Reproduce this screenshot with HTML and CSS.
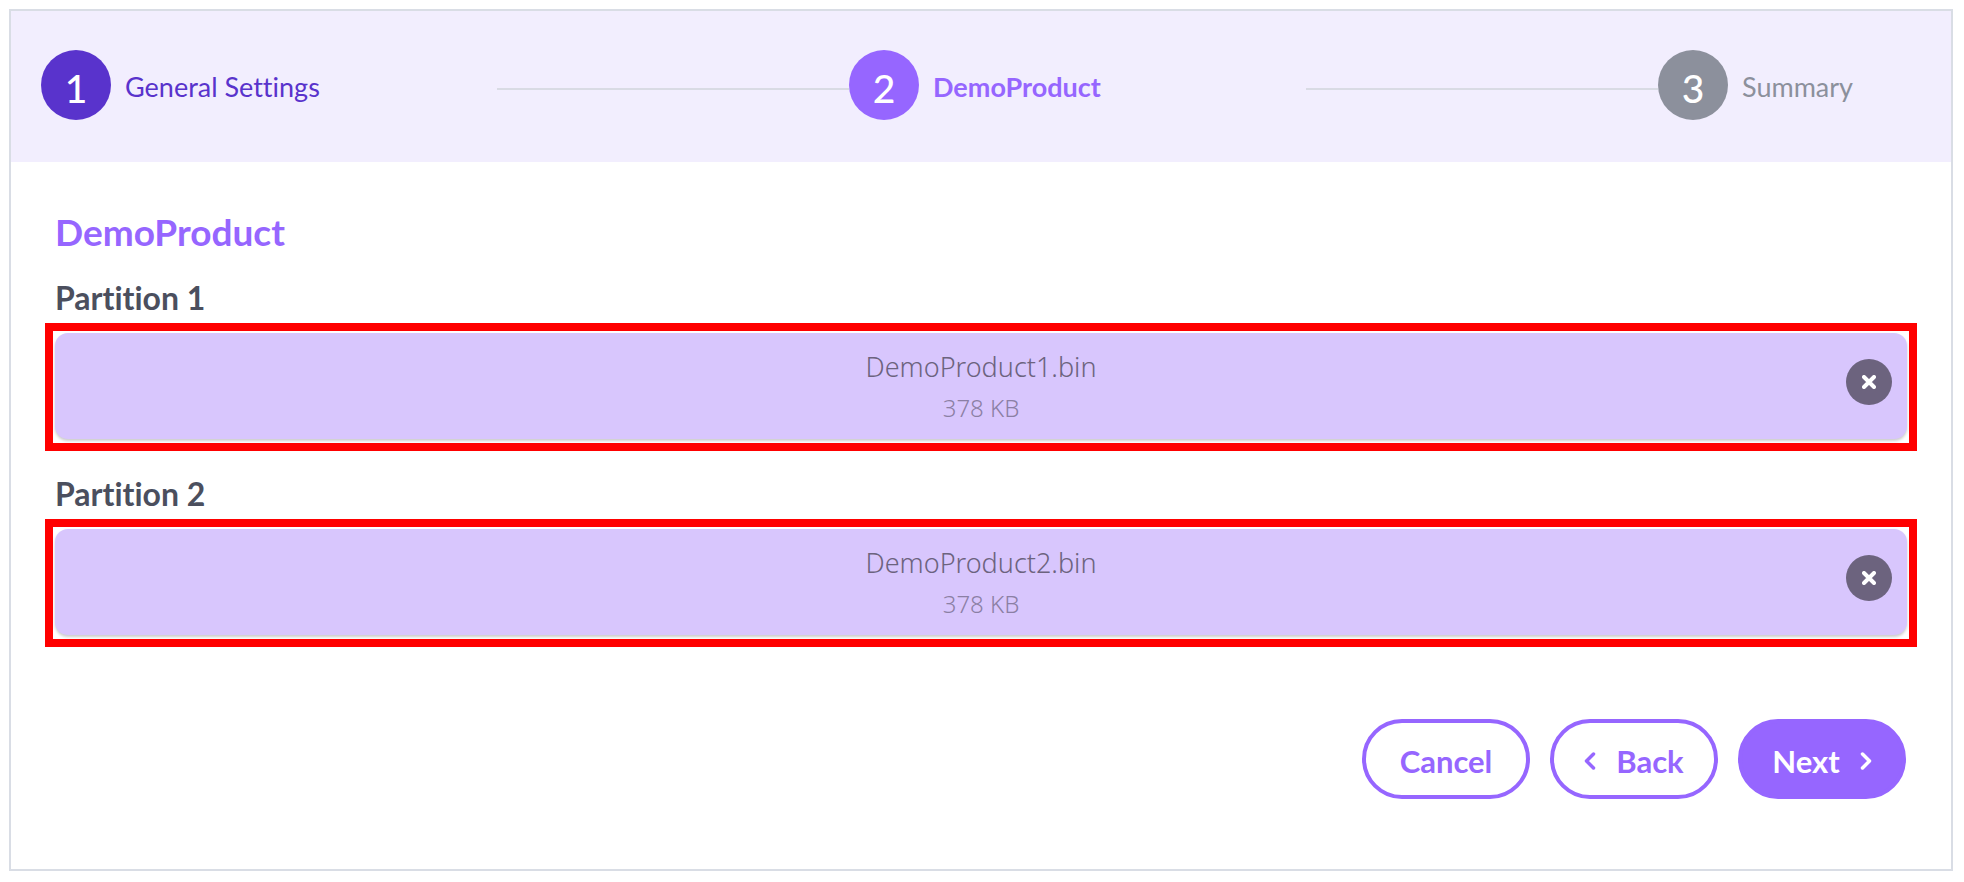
FILE: index.html
```html
<!DOCTYPE html>
<html lang="en">
<head>
<meta charset="utf-8">
<title>DemoProduct</title>
<link rel="stylesheet" href="styles.css">
</head>
<body>
<main class="wizard">
  <ol class="steps">
    <li class="step step-done">
      <div class="step-info"><span class="step-number">1</span><span class="step-label">General Settings</span></div>
      <span class="step-line"></span>
    </li>
    <li class="step step-active" aria-current="step">
      <div class="step-info"><span class="step-number">2</span><span class="step-label">DemoProduct</span></div>
      <span class="step-line"></span>
    </li>
    <li class="step step-pending">
      <div class="step-info"><span class="step-number">3</span><span class="step-label">Summary</span></div>
    </li>
  </ol>
  <div class="content">
    <h1 class="title">DemoProduct</h1>
    <section class="partition">
      <h2 class="partition-title">Partition 1</h2>
      <div class="highlight">
        <div class="file">
          <div class="file-text">
            <span class="file-name">DemoProduct1.bin</span>
            <span class="file-size">378 KB</span>
          </div>
          <button class="remove" type="button" aria-label="Remove DemoProduct1.bin">
            <svg width="14" height="14" viewBox="0 0 14 14" fill="none" stroke="currentColor" stroke-width="4" stroke-linecap="round"><path d="M2 2l10 10M12 2L2 12"/></svg>
          </button>
        </div>
      </div>
    </section>
    <section class="partition">
      <h2 class="partition-title">Partition 2</h2>
      <div class="highlight">
        <div class="file">
          <div class="file-text">
            <span class="file-name">DemoProduct2.bin</span>
            <span class="file-size">378 KB</span>
          </div>
          <button class="remove" type="button" aria-label="Remove DemoProduct2.bin">
            <svg width="14" height="14" viewBox="0 0 14 14" fill="none" stroke="currentColor" stroke-width="4" stroke-linecap="round"><path d="M2 2l10 10M12 2L2 12"/></svg>
          </button>
        </div>
      </div>
    </section>
    <div class="actions">
      <button class="button" type="button">Cancel</button>
      <button class="button" type="button">
        <svg width="12" height="18" viewBox="0 0 12 18" fill="none" stroke="currentColor" stroke-width="3.500" stroke-linecap="round" stroke-linejoin="round"><path d="M9.500 2L2.500 9L9.500 16"/></svg>
        Back
      </button>
      <button class="button button-primary" type="button">
        Next
        <svg width="12" height="18" viewBox="0 0 12 18" fill="none" stroke="currentColor" stroke-width="3.500" stroke-linecap="round" stroke-linejoin="round"><path d="M2.500 2L9.500 9L2.500 16"/></svg>
      </button>
    </div>
  </div>
</main>
</body>
</html>
```
FILE: styles.css
```css
* {
  box-sizing: border-box;
}

body {
  margin: 0;
  padding: 9px 11px 10px 9px;
  background: #fff;
  font-family: Lato, "Liberation Sans", sans-serif;
  font-variant-ligatures: none;
}

.wizard {
  border: 2px solid #d9dde5;
}

.steps {
  display: grid;
  grid-template-columns: 808fr 809fr 263fr;
  margin: 0;
  padding: 39px 30px 42px;
  list-style: none;
  background: #f2eefe;
}

.step {
  display: flex;
  align-items: center;
}

.step-info {
  display: flex;
  flex: 456;
  align-items: center;
  gap: 14px;
}

.step-number {
  display: flex;
  flex: none;
  align-items: center;
  justify-content: center;
  width: 70px;
  height: 70px;
  padding-top: 6px;
  border-radius: 50%;
  background: #5933cc;
  color: #fff;
  font-size: 39px;
  font-weight: 500;
  line-height: 48px;
}

.step-label {
  padding-top: 4px;
  color: #5933cc;
  font-size: 27px;
  line-height: 32px;
  white-space: nowrap;
}

.step-line {
  flex: 352;
  height: 2px;
  margin-top: 8px;
  background: #d9dbe4;
}

.step-active .step-number {
  background: #9666ff;
}

.step-active .step-label {
  color: #9666ff;
  font-weight: 700;
}

.step-pending .step-number {
  background: #8c909c;
}

.step-pending .step-label {
  color: #8c909c;
}

.content {
  padding: 48px 34px 70px;
}

.title {
  margin: 0 10px 24px;
  color: #9666ff;
  font-size: 37px;
  font-weight: 700;
  line-height: 44px;
}

.partition {
  margin-bottom: 23px;
}

.partition-title {
  margin: 0 10px 6px;
  color: #4b4f5e;
  font-size: 32px;
  font-weight: 700;
  line-height: 39px;
}

.highlight {
  padding: 2px 2px 4px;
  border: 8px solid #f00;
}

.file {
  display: grid;
  grid-template-columns: 46px 1fr 46px;
  align-items: center;
  padding: 14px 15px;
  border-radius: 13px;
  background: #d8c6fd;
  box-shadow: 0 2px 3px rgba(0, 0, 0, 0.2);
}

.file-text {
  display: flex;
  grid-column: 2;
  flex-direction: column;
  align-items: center;
  gap: 4px;
  font-family: "Noto Sans", "Open Sans", sans-serif;
  font-weight: 300;
}

.file-name {
  color: #6c637e;
  font-size: 27px;
  line-height: 40px;
}

.file-size {
  color: #8b7fa4;
  font-size: 24px;
  line-height: 34px;
}

.remove {
  display: flex;
  align-items: center;
  justify-content: center;
  width: 46px;
  height: 46px;
  margin-bottom: 8px;
  padding: 0;
  border: 0;
  border-radius: 50%;
  background: #6c637e;
  color: #fff;
}

.actions {
  display: flex;
  justify-content: flex-end;
  gap: 20px;
  padding: 49px 11px 0;
}

.button {
  display: flex;
  align-items: center;
  justify-content: center;
  gap: 20px;
  width: 168px;
  height: 80px;
  padding: 4px 0 0;
  border: 4px solid #9666ff;
  border-radius: 40px;
  background: #fff;
  color: #9666ff;
  font-family: inherit;
  font-size: 31px;
  font-weight: 700;
  line-height: 36px;
}

.button-primary {
  background: #9666ff;
  color: #fff;
}
```
